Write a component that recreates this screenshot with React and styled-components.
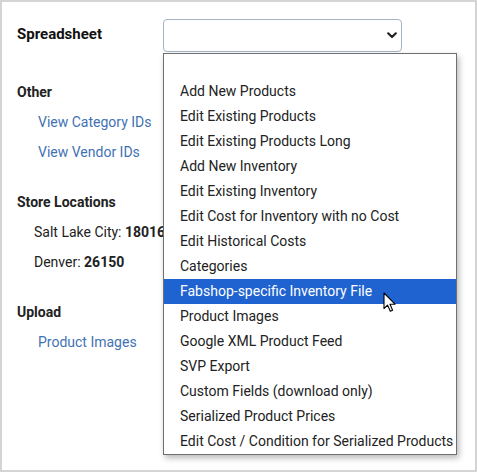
import React from 'react';
import styled, { createGlobalStyle } from 'styled-components';

const GlobalStyle = createGlobalStyle`
	html, body {
		margin: 0;
		padding: 0;
		background: #ffffff;
	}
	* {
		box-sizing: border-box;
	}
`

const options = [
	'',
	'Add New Products',
	'Edit Existing Products',
	'Edit Existing Products Long',
	'Add New Inventory',
	'Edit Existing Inventory',
	'Edit Cost for Inventory with no Cost',
	'Edit Historical Costs',
	'Categories',
	'Fabshop-specific Inventory File',
	'Product Images',
	'Google XML Product Feed',
	'SVP Export',
	'Custom Fields (download only)',
	'Serialized Product Prices',
	'Edit Cost / Condition for Serialized Products',
];

const Chevron = () => (
	<svg width="10" height="7" viewBox="0 0 10 7">
		<path d="M1.2 1.3 L5 5 L8.8 1.3" fill="none" stroke="#222" strokeWidth="2.2" strokeLinecap="round" strokeLinejoin="round" />
	</svg>
)

const Pointer = () => (
	<svg width="14" height="21" viewBox="0 0 14 21">
		<path d="M1 1 L1 16.5 L4.6 13.1 L7.3 19.3 L9.6 18.3 L7 12.2 L12 12.2 Z" fill="#fff" stroke="#000" strokeWidth="1.1" strokeLinejoin="round" />
	</svg>
)

class App extends React.Component {
	render() {
		return (
			<>
				<GlobalStyle />
				<Frame>
					<TopRow>
						<MainLabel>Spreadsheet</MainLabel>
						<Select>
							<Chevron />
						</Select>
					</TopRow>

					<Section>
						<Heading>Other</Heading>
						<Link>View Category IDs</Link>
						<Link>View Vendor IDs</Link>
					</Section>

					<Section>
						<Heading>Store Locations</Heading>
						<Location>Salt Lake City: <b>18016</b></Location>
						<Location>Denver: <b>26150</b></Location>
					</Section>

					<Section>
						<Heading>Upload</Heading>
						<Link>Product Images</Link>
					</Section>

					<Dropdown>
						{options.map((opt, i) => (
							<Option key={i} $active={i === 9}>
								{opt}
								{i === 9 && (
									<CursorSpot>
										<Pointer />
									</CursorSpot>
								)}
							</Option>
						))}
					</Dropdown>
				</Frame>
			</>
		)
	}
};

export default App;

const Frame = styled.div`
	position: relative;
	width: 477px;
	height: 472px;
	border: 2px solid #d4d4d4;
	background: #ffffff;
	padding: 17px 0 0 15px;
	font-family: Roboto, "Liberation Sans", Arial, sans-serif;
	font-size: 14px;
	color: #222;
`

const TopRow = styled.div`
	display: flex;
	align-items: center;
	height: 33px;
`

const MainLabel = styled.div`
	width: 146px;
	font-size: 15px;
	font-weight: 700;
	color: #111;
	margin-top: -3px;
`

const Select = styled.div`
	width: 239px;
	height: 33px;
	border: 1px solid #a3b4c6;
	border-radius: 4px;
	display: flex;
	align-items: center;
	justify-content: flex-end;
	padding-right: 4px;
	background: #fff;
`

const Section = styled.div`
	display: flex;
	flex-direction: column;
	margin-top: 25px;

	& + & {
		margin-top: 20px;
	}
`

const Heading = styled.div`
	line-height: 30px;
	font-weight: 700;
	color: #222;
`

const Link = styled.a`
	line-height: 30px;
	padding-left: 21px;
	color: #3f72b3;
	text-decoration: none;
	cursor: pointer;
`

const Location = styled.div`
	line-height: 30px;
	padding-left: 17px;
	color: #222;

	b {
		font-weight: 700;
	}
`

const Dropdown = styled.div`
	position: absolute;
	top: 51px;
	left: 161px;
	width: 294px;
	border: 1px solid #6f6f6f;
	background: #fff;
	box-shadow: 2px 3px 6px rgba(0, 0, 0, 0.28);
	padding: 0;
`

const Option = styled.div`
	position: relative;
	height: 25px;
	line-height: 25px;
	padding-left: 16px;
	white-space: nowrap;
	font-size: 14px;
	background: ${p => (p.$active ? '#1f63d0' : 'transparent')};
	color: ${p => (p.$active ? '#ffffff' : '#222')};
`

const CursorSpot = styled.span`
	position: absolute;
	left: 219px;
	top: 13px;
	line-height: 0;
`
